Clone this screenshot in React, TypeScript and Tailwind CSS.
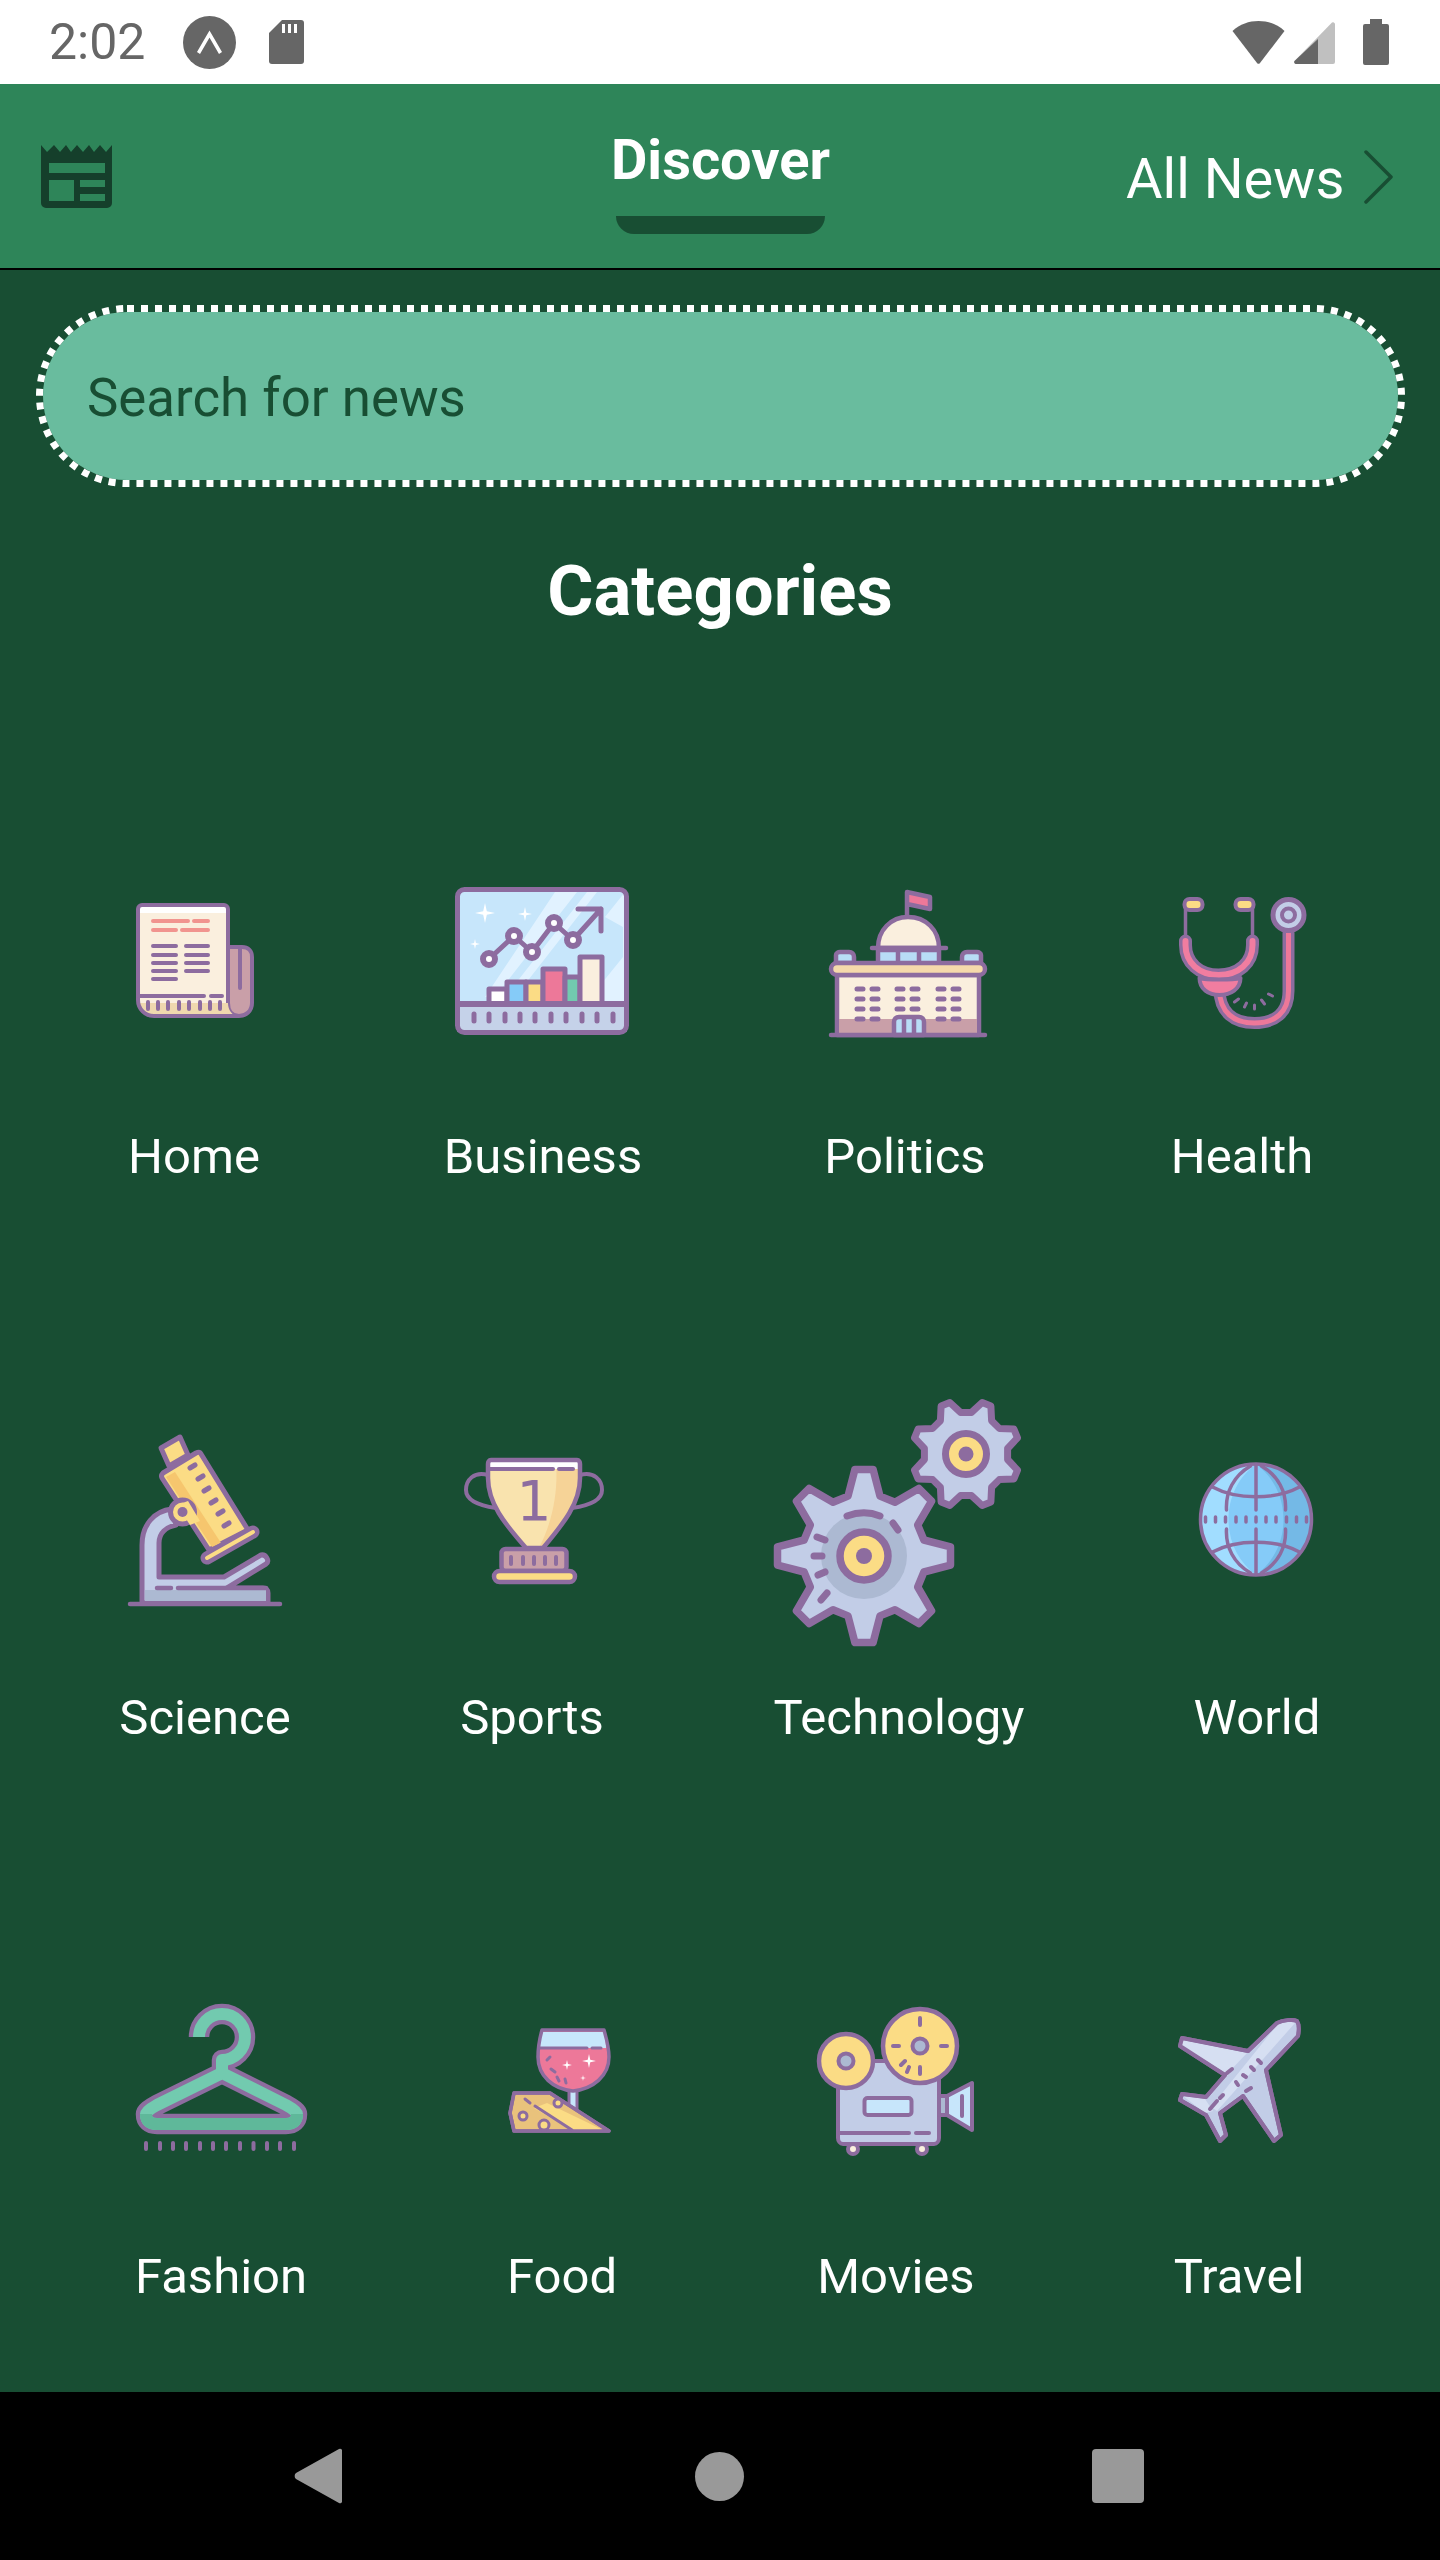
import type { ReactNode } from 'react';

const P = '#8d6c9f';
const CREAM = '#faefde';
const SKY = '#c7e6fb';
const BLUE = '#85cbf8';
const PERI = '#c2cde7';
const SLATE = '#acb9d2';
const YEL = '#fbdc85';
const PINK = '#ed7899';
const ROSE = '#c99fa8';
const GREEN = '#72caaf';

// short vertical purple marks, the icons use them a lot
function Ticks({ xs, y1, y2, w = 4 }: { xs: number[]; y1: number; y2: number; w?: number }) {
  return (
    <g stroke={P} strokeWidth={w} strokeLinecap="round">
      {xs.map((x) => (
        <line key={x} x1={x} x2={x} y1={y1} y2={y2} />
      ))}
    </g>
  );
}

function Marks({ d, w = 4, color = P }: { d: string; w?: number; color?: string }) {
  return <path d={d} fill="none" stroke={color} strokeWidth={w} strokeLinecap="round" strokeLinejoin="round" />;
}

function Star({ x, y, r, fill = '#fff' }: { x: number; y: number; r: number; fill?: string }) {
  const k = r * 0.18;
  return (
    <path
      fill={fill}
      d={`M${x} ${y - r}L${x + k} ${y - k}L${x + r} ${y}L${x + k} ${y + k}L${x} ${y + r}L${x - k} ${y + k}L${x - r} ${y}L${x - k} ${y - k}Z`}
    />
  );
}

function gearPath(cx: number, cy: number, tip: number, root: number, start: number, tipHalf: number, rootHalf: number) {
  let d = '';
  const pt = (r: number, deg: number) => {
    const a = (deg * Math.PI) / 180;
    return `${(cx + r * Math.cos(a)).toFixed(1)} ${(cy + r * Math.sin(a)).toFixed(1)}`;
  };
  for (let i = 0; i < 8; i++) {
    const a = start + i * 45;
    d += `${i === 0 ? 'M' : 'L'}${pt(root, a - rootHalf)}L${pt(tip, a - tipHalf)}L${pt(tip, a + tipHalf)}L${pt(root, a + rootHalf)}`;
  }
  return d + 'Z';
}

function HomeIcon() {
  return (
    <g strokeLinejoin="round">
      <path d="M94 44H106C112 44 116 48 116 54V100C116 108 110 113 103 113C96 113 92 108 92 100V44Z" fill={ROSE} stroke={P} strokeWidth="4" />
      <path d="M2 94H92V100C92 106 95 111 100 113H18C9 113 2 106 2 97Z" fill="#efd8ae" />
      <path d="M2 94V6C2 4 4 2 6 2H90C92 2 92 4 92 6V100H2Z" fill={CREAM} />
      <rect x="4" y="4" width="87" height="6" fill="#fff" />
      <path d="M2 92V97C2 106 9 113 18 113H103M92 100V6C92 4 90 2 88 2H6C4 2 2 4 2 6V92" fill="none" stroke={P} strokeWidth="4" />
      <Marks color="#f1948f" d="M17 18H52M58 18H72M17 27H40M46 27H72" />
      <Marks d="M17 43H40M17 52H40M17 60H40M17 68H40M17 76H40M50 43H72M50 52H72M50 60H72M50 68H72M2 93H68M75 93H86M104 46V85" />
      <Ticks xs={[12, 22, 32, 43, 53, 64, 74, 84]} y1={99} y2={106} />
    </g>
  );
}

function BusinessIcon() {
  return (
    <g strokeLinejoin="round">
      <rect x="2.5" y="2.5" width="169" height="143" rx="7" fill={SKY} />
      <path d="M100 5H122L40 110H30ZM132 5H142L60 110H50ZM150 30L170 5V117H130L168 70V40Z" fill="#e1f2ff" />
      <rect x="2.5" y="117" width="169" height="28" fill="#c5d2e9" />
      <Star x={30} y={26} r={10} />
      <Star x={70} y={27} r={7} />
      <Star x={20} y={57} r={5} />
      <g stroke={P} strokeWidth="5">
        <rect x="34" y="102" width="18" height="15" fill="#fff" />
        <rect x="52" y="95" width="19" height="22" fill={BLUE} />
        <rect x="71" y="95" width="17" height="22" fill={YEL} />
        <rect x="88" y="82" width="22" height="35" fill={PINK} />
        <rect x="110" y="90" width="15" height="27" fill={GREEN} />
        <rect x="125" y="70" width="22" height="47" fill={CREAM} />
      </g>
      <Marks w={5} d="M34 72L59 49L77 65L99 36L118 53L146 22M123 22H146V44" />
      <g fill="#fff" stroke={P} strokeWidth="6">
        <circle cx="34" cy="72" r="6" />
        <circle cx="59" cy="49" r="6" />
        <circle cx="77" cy="65" r="6" />
        <circle cx="99" cy="36" r="6" />
        <circle cx="118" cy="53" r="6" />
      </g>
      <path d="M3 117H171" stroke={P} strokeWidth="6" />
      <rect x="2.5" y="2.5" width="169" height="143" rx="7" fill="none" stroke={P} strokeWidth="5" />
      <Ticks xs={[19, 34, 50, 65, 80, 96, 111, 127, 142, 158]} y1={127} y2={134} w={5} />
    </g>
  );
}

function PoliticsIcon() {
  return (
    <g strokeLinejoin="round" stroke={P} strokeWidth="4.5">
      <path d="M78 27V2L101 7V19L78 14" fill={PINK} />
      <path d="M49 58C49 40 62 27 79 27C97 27 110 40 110 58Z" fill={CREAM} />
      <rect x="49" y="60" width="61" height="14" fill="#b8ddf6" />
      <path d="M69 60V73M90 60V73" />
      <path d="M43 58H117" strokeLinecap="round" />
      <path d="M7 73V65C7 63 9 62 11 62H20C23 62 25 64 25 67V73ZM133 73V67C133 64 135 62 138 62H148C150 62 152 63 152 65V73Z" fill="#b8ddf6" />
      <path d="M8 85H150V145H8Z" fill={CREAM} />
      <path d="M10 129H148V143H10Z" fill={ROSE} stroke="none" />
      <rect x="2" y="73" width="154" height="12" rx="6" fill="#f5d9ab" />
      <path d="M65 145V132C65 129 67 127 70 127H90C93 127 95 129 95 132V145Z" fill="#b8ddf6" />
      <path d="M75 128V144M85 128V144" />
      <path d="M2 145H156" strokeLinecap="round" />
      <g strokeWidth="5" strokeLinecap="round">
        <path d="M28 99H34M43 99H49M68 99H74M83 99H89M109 99H115M124 99H130" />
        <path d="M28 109H34M43 109H49M68 109H74M83 109H89M109 109H115M124 109H130" />
        <path d="M28 119H34M43 119H49M68 119H74M83 119H89M109 119H115M124 119H130" />
        <path d="M28 129H34M43 129H49M109 129H115M124 129H130" />
      </g>
    </g>
  );
}

function HealthIcon() {
  const lower = 'M41 92C41 116 56 126 76 126C96 126 110 116 110 94V36';
  const upper = 'M7 44V48C7 66 21 78 40 78C60 78 74 66 74 48V44';
  return (
    <g strokeLinejoin="round">
      <path d={lower} fill="none" stroke={P} strokeWidth="12" strokeLinecap="round" />
      <path d={lower} fill="none" stroke={PINK} strokeWidth="5" />
      <Marks d="M7 12V40M74 12V40" w={3.5} />
      <path d={upper} fill="none" stroke={P} strokeWidth="13" strokeLinecap="round" />
      <path d={upper} fill="none" stroke="#f17da0" strokeWidth="6" strokeLinecap="round" />
      <path d="M21 81C21 92 30 98 41 98C52 98 62 92 62 81C54 83 28 83 21 81Z" fill="#f17da0" stroke={P} strokeWidth="4" />
      <rect x="6" y="2" width="18" height="11" rx="5" fill={YEL} stroke={P} strokeWidth="4" />
      <rect x="57" y="2" width="18" height="11" rx="5" fill={YEL} stroke={P} strokeWidth="4" />
      <circle cx="110" cy="18" r="15.5" fill={PERI} stroke={P} strokeWidth="5" />
      <circle cx="110" cy="18" r="6.5" fill={PERI} stroke={P} strokeWidth="4" />
      <Marks w={3} d="M56 105L60 102M66 110L68 106M76 112V108M86 107L83 103M94 99L90 97" />
    </g>
  );
}

function ScienceIcon() {
  return (
    <g strokeLinejoin="round">
      <path d="M42 74C24 76 12 90 12 110V168H138V158C138 155 136 153 133 153H97L136 129C140 126 136 119 131 120L94 142H29V108C29 98 36 92 46 90Z" fill={PERI} stroke={P} strokeWidth="5" />
      <path d="M15 155H136V166H15Z" fill={SLATE} />
      <Marks d="M27 153H41M48 153H136M0 169H150" w={4.5} />
      <path d="M31 13L50 2L58 20L39 31Z" fill={YEL} stroke={P} strokeWidth="5" />
      <path d="M33 38L66 18C68 17 70 17 71 19L118 95L79 115L32 43C31 41 32 39 33 38Z" fill={YEL} stroke={P} strokeWidth="5" />
      <path d="M36 42L45 37L91 108L82 112Z" fill="#f6c66e" />
      <path d="M77 123L123 97" stroke={P} strokeWidth="13" strokeLinecap="round" />
      <path d="M77 123L123 97" stroke={YEL} strokeWidth="4" strokeLinecap="round" />
      <circle cx="52.5" cy="77" r="12" fill={YEL} stroke={P} strokeWidth="5" />
      <path d="M58 66L70 86L60 90L47 70Z" fill={YEL} />
      <circle cx="52.5" cy="77" r="5" fill={P} />
      <Marks w={5} d="M60 33L65 30M68 44L73 41M74 56L79 53M81 68L86 65M88 79L93 76M94 91L99 88" />
    </g>
  );
}

function SportsIcon() {
  return (
    <g strokeLinejoin="round">
      <Marks w={4} d="M24 17C10 13 2 22 2 32C2 44 18 48 32 50M116 17C130 13 138 22 138 32C138 44 122 48 108 50" />
      <path d="M24 2H116V20C116 45 100 65 79 90H62C40 65 24 45 24 20Z" fill="#f9e3ae" />
      <path d="M92 4H114V20C114 45 99 64 78 88H76C90 60 94 30 92 4Z" fill="#f6d397" />
      <rect x="26" y="4" width="88" height="7" fill="#fff" />
      <path d="M24 6C24 4 25 2 27 2H113C115 2 116 4 116 6V20C116 45 100 65 79 90H62C40 65 24 45 24 20Z" fill="none" stroke={P} strokeWidth="4.5" />
      <Marks w={4} d="M25 11H89M95 11H109" />
      <text x="70" y="62" textAnchor="middle" fontFamily="DejaVu Sans, sans-serif" fontSize="55" fill={P}>
        1
      </text>
      <rect x="37.5" y="91" width="65" height="22" rx="4" fill={ROSE} stroke={P} strokeWidth="4.5" />
      <Ticks xs={[47, 59, 70, 81, 92]} y1={99} y2={106} />
      <rect x="30" y="113" width="81" height="11" rx="5.5" fill={YEL} stroke={P} strokeWidth="4.5" />
    </g>
  );
}

function TechnologyIcon() {
  return (
    <g strokeLinejoin="round">
      <path d={gearPath(193, 56, 54, 42, 22.5, 5, 15)} fill={PERI} stroke={P} strokeWidth="7" />
      <circle cx="193" cy="56" r="20.5" fill={YEL} stroke={P} strokeWidth="7" />
      <circle cx="193" cy="56" r="7.5" fill={P} />
      <path d={gearPath(91, 158, 87, 62, 0, 6, 15)} fill={PERI} stroke={P} strokeWidth="7.5" />
      <circle cx="91" cy="158" r="43" fill={SLATE} />
      <circle cx="91" cy="158" r="24" fill={YEL} stroke={P} strokeWidth="7.5" />
      <circle cx="91" cy="158" r="8" fill={P} />
      <Marks w={7} d="M74 118C85 114 97 114 107 118M120 125L125 132M52 142L44 139M41 158H49M52 174L45 177M54 195L48 202" />
    </g>
  );
}

function WorldIcon() {
  return (
    <g strokeLinejoin="round">
      <circle cx="57.5" cy="57.5" r="55.5" fill={BLUE} />
      <path d="M57.5 2C27 2 2 27 2 57.5C2 88 27 113 57.5 113C40 100 30 80 30 57.5C30 35 40 15 57.5 2Z" fill="#a1ddff" />
      <path d="M57.5 2C88 2 113 27 113 57.5C113 88 88 113 57.5 113C75 100 85 80 85 57.5C85 35 75 15 57.5 2Z" fill="#74b9e6" />
      <circle cx="57.5" cy="57.5" r="55.5" fill="none" stroke={P} strokeWidth="3.5" />
      <g fill="none" stroke={P} strokeWidth="3.5" strokeLinecap="round">
        <path d="M57.5 3V48M57.5 67V112" />
        <path d="M28 48C27 30 35 14 52 4M87 48C88 30 80 14 63 4M28 67C27 85 35 101 52 111M87 67C88 85 80 101 63 111" />
        <path d="M14 25C38 38 77 38 101 25M14 90C38 77 77 77 101 90" />
      </g>
      <Ticks xs={[7, 17, 27, 37.5, 47.5, 57.5, 67.5, 77.5, 88, 98, 108]} y1={55} y2={60} w={3.5} />
    </g>
  );
}

function FashionIcon() {
  const hanger = 'M63 32A23 23 0 1 1 86 55V68M86 68L21 100Q10 106 10 109Q10 119 21 119H150Q161 119 161 109Q161 106 150 100Z';
  return (
    <g strokeLinejoin="round">
      <path d={hanger} fill="none" stroke={P} strokeWidth="20.5" />
      <path d={hanger} fill="none" stroke={GREEN} strokeWidth="12" />
      <path d="M10 109Q10 119 21 119H150Q161 119 161 109" fill="none" stroke="#5fb89a" strokeWidth="12" />
      <Ticks xs={[10, 24, 37, 50, 64, 77, 90, 104, 117.5, 131, 144, 158]} y1={138} y2={144} />
    </g>
  );
}

function FoodIcon() {
  return (
    <g strokeLinejoin="round">
      <rect x="60" y="60" width="8" height="24" fill={SKY} stroke={P} strokeWidth="3" />
      <path d="M33 1H95C97 8 100 18 100 28C100 47 84 60 64 62C44 60 29 47 29 28C29 18 31 8 33 1Z" fill={PINK} />
      <path d="M33 3H95C96 8 97 14 97 19H31C31 14 32 8 33 3Z" fill={SKY} />
      <path d="M33 1H95C97 8 100 18 100 28C100 47 84 60 64 62C44 60 29 47 29 28C29 18 31 8 33 1Z" fill="none" stroke={P} strokeWidth="3.5" />
      <Marks w={3} d="M31 19H78M83 19H92M38 31L41 28M42 40L46 43M48 48L50 52M56 50L57 54" />
      <Star x={58} y={36} r={5} />
      <Star x={80} y={32} r={7} />
      <Star x={74} y={49} r={3} />
      <path d="M5 64H41L100 102H5L1 84Z" fill="#e9c27c" stroke={P} strokeWidth="3.5" />
      <path d="M25 79L38 74L94 101H62Z" fill={YEL} />
      <path d="M5 64H41L100 102H5L1 84Z" fill="none" stroke={P} strokeWidth="3.5" />
      <Marks w={3} d="M16 70L21 74M26 77L63 101" />
      <g fill={YEL} stroke={P} strokeWidth="3">
        <circle cx="49" cy="74" r="4" />
        <circle cx="14" cy="87" r="4" />
        <circle cx="35" cy="96" r="5" />
      </g>
    </g>
  );
}

function MoviesIcon() {
  return (
    <g strokeLinejoin="round">
      <circle cx="36" cy="142" r="5" fill={CREAM} stroke={P} strokeWidth="4" />
      <circle cx="105" cy="142" r="5" fill={CREAM} stroke={P} strokeWidth="4" />
      <path d="M21 54H122V131C122 134 120 137 117 137H26C23 137 21 134 21 131Z" fill={PERI} stroke={P} strokeWidth="4" />
      <rect x="47.5" y="91" width="47" height="17" rx="3" fill={SKY} stroke={P} strokeWidth="4" />
      <path d="M122 89H130V108H122Z" fill={SLATE} stroke={P} strokeWidth="4" />
      <path d="M130 89L155 76V123L130 108Z" fill={SKY} stroke={P} strokeWidth="4" />
      <Marks d="M145 89V109M23 126H92M99 126H112" />
      <circle cx="29" cy="54" r="27" fill={YEL} stroke={P} strokeWidth="4.5" />
      <circle cx="29" cy="54" r="7.5" fill={SLATE} stroke={P} strokeWidth="4" />
      <circle cx="103" cy="39" r="37" fill={YEL} stroke={P} strokeWidth="4.5" />
      <circle cx="103" cy="39" r="7.5" fill={SLATE} stroke={P} strokeWidth="4" />
      <Marks d="M103 11V18M103 60V67M76 39H82M124 39H130M88 54L84 58M92 60L90 65" />
    </g>
  );
}

function TravelIcon() {
  return (
    <g strokeLinejoin="round">
      <path
        d="M100 4C106 1 116 0 120 2C122 5 122 12 121 17L89 51L104 116L97 122L66 77L43 94L49 116L43 122L29 96L3 81L5 75L29 78L48 56L3 27L5 19L71 32Z"
        fill={PERI}
        stroke={P}
        strokeWidth="4"
      />
      <path d="M5 21L70 34L50 55L5 27ZM6 77L28 80L36 92L28 94ZM100 6C106 3 114 2 118 4L40 92L34 88Z" fill="#d6dff2" />
      <path d="M100 4C106 1 116 0 120 2C122 5 122 12 121 17L89 51L104 116L97 122L66 77L43 94L49 116L43 122L29 96L3 81L5 75L29 78L48 56L3 27L5 19L71 32Z" fill="none" stroke={P} strokeWidth="4" />
      <Marks d="M81 41L84 44M74 48L77 51M66 56L69 58M59 63L61 66M50 54L55 50M69 72L74 69M43 79L46 76M33 90L40 82" />
    </g>
  );
}

type Cell = { label: string; className: string; tx: number; ty: number; icon: ReactNode };

const rows: { className: string; cells: Cell[] }[] = [
  {
    className: 'mt-[205px]',
    cells: [
      { label: 'Home', className: 'ml-[69px]', tx: 67, ty: 67, icon: <HomeIcon /> },
      { label: 'Business', className: 'ml-[99px]', tx: 37, ty: 51, icon: <BusinessIcon /> },
      { label: 'Politics', className: 'ml-[112px]', tx: 49, ty: 54, icon: <PoliticsIcon /> },
      { label: 'Health', className: 'ml-[87px]', tx: 61.5, ty: 61, icon: <HealthIcon /> },
    ],
  },
  {
    className: 'mt-[212px]',
    cells: [
      { label: 'Science', className: 'ml-[80px]', tx: 50, ty: 38, icon: <ScienceIcon /> },
      { label: 'Sports', className: 'ml-[77px]', tx: 57, ty: 61, icon: <SportsIcon /> },
      { label: 'Technology', className: 'ml-[117px]', tx: -1, ty: 1, icon: <TechnologyIcon /> },
      { label: 'World', className: 'ml-[108px]', tx: 66.5, ty: 65, icon: <WorldIcon /> },
    ],
  },
  {
    className: 'mt-[210px]',
    cells: [
      { label: 'Fashion', className: 'ml-[96px]', tx: 40, ty: 49, icon: <FashionIcon /> },
      { label: 'Food', className: 'ml-[91px]', tx: 72, ty: 73, icon: <FoodIcon /> },
      { label: 'Movies', className: 'ml-[84px]', tx: 46, ty: 51, icon: <MoviesIcon /> },
      { label: 'Travel', className: 'ml-[93px]', tx: 63, ty: 63, icon: <TravelIcon /> },
    ],
  },
];

function StatusBar() {
  return (
    <div className="flex h-[84px] shrink-0 items-center bg-white text-[#666]">
      <span className="ml-[49px] text-[50px] leading-none">2:02</span>
      <svg className="ml-[38px]" width="53" height="53" viewBox="0 0 53 53">
        <circle cx="26.5" cy="26.5" r="26.5" fill="#666" />
        <path d="M15.5 37L26.5 18L37.5 37" fill="none" stroke="#fff" strokeWidth="3.5" />
      </svg>
      <svg className="ml-[33px]" width="35" height="44" viewBox="0 0 35 44">
        <path d="M13 0H32A3 3 0 0 1 35 3V41A3 3 0 0 1 32 44H3A3 3 0 0 1 0 41V13Z" fill="#666" />
        <path d="M13 4H16V13H13ZM19 4H22V13H19ZM25 4H28V13H25Z" fill="#fff" />
      </svg>
      <svg className="ml-[928px]" width="53" height="43" viewBox="0 0 53 43">
        <path d="M0.5 10C8 3 17 0 26.5 0C36 0 45 3 52.5 10L28 42A2 2 0 0 1 25 42Z" fill="#666" />
      </svg>
      <svg className="ml-[9px] mt-[2px]" width="41" height="42" viewBox="0 0 41 42">
        <path d="M38 0.5A2 2 0 0 1 41 2V40A2 2 0 0 1 39 42H2A2 2 0 0 1 0.5 39Z" fill="#c0c0c0" />
        <path d="M24 17V42H2A2 2 0 0 1 0.5 39Z" fill="#666" />
      </svg>
      <svg className="ml-[28px]" width="26" height="46" viewBox="0 0 26 46">
        <path d="M7 0H19V5H24A2 2 0 0 1 26 7V44A2 2 0 0 1 24 46H2A2 2 0 0 1 0 44V7A2 2 0 0 1 2 5H7Z" fill="#666" />
      </svg>
    </div>
  );
}

function AppBar() {
  return (
    <div className="relative flex h-[186px] shrink-0 items-start border-b-2 border-black bg-[#2e8559]">
      <svg className="ml-[41px] mt-[61px]" width="71" height="63" viewBox="0 0 71 63">
        <path
          d="M0 0L6 7L13 0L19 7L25 0L30 7L36 0L42 7L48 0L53 7L59 0L65 7L71 0V58A5 5 0 0 1 66 63H5A5 5 0 0 1 0 58Z"
          fill="#153f2b"
        />
        <path d="M8 18H64V28H8ZM8 35H33V56H8ZM39 35H64V42H39ZM39 49H64V56H39Z" fill="#2e8559" />
      </svg>
      <div className="ml-[504px] flex w-[209px] flex-col items-center pt-[43px]">
        <span className="whitespace-nowrap text-[56px] font-bold leading-[66px] text-white">Discover</span>
        <div className="mt-[23px] h-[18px] w-[209px] rounded-b-[18px] bg-[#184e33]" />
      </div>
      <span className="ml-[301px] mt-[62px] whitespace-nowrap text-[56px] leading-[66px] text-white">All News</span>
      <svg className="ml-[20px] mt-[66px]" width="30" height="54" viewBox="0 0 30 54">
        <path d="M2 2L27 27L2 52" fill="none" stroke="#184e33" strokeWidth="3.5" strokeLinecap="round" strokeLinejoin="round" />
      </svg>
    </div>
  );
}

function SearchBox() {
  return (
    <div className="relative ml-[36px] mt-[35px] h-[182px] w-[1369px] p-[7px]">
      <div className="flex h-[168px] items-center rounded-full bg-[#69bc9e] pl-[44px] pt-[5px]">
        <span className="text-[52.8px] text-[#184e33]">Search for news</span>
      </div>
      <svg className="absolute inset-0" width="1369" height="182" viewBox="0 0 1369 182">
        <rect x="3.5" y="3.5" width="1362" height="175" rx="87.5" fill="none" stroke="#fff" strokeWidth="7" strokeDasharray="7 7" />
      </svg>
    </div>
  );
}

function NavBar() {
  return (
    <div className="flex h-[168px] shrink-0 items-center bg-black">
      <svg className="ml-[294px]" width="48" height="56" viewBox="0 0 48 56">
        <path d="M45 1A2 2 0 0 1 48 3V53A2 2 0 0 1 45 55L2 31A4 4 0 0 1 2 25Z" fill="#999" />
      </svg>
      <div className="ml-[353px] h-[49px] w-[49px] rounded-full bg-[#999]" />
      <div className="ml-[348px] h-[54px] w-[52px] rounded-[4px] bg-[#999]" />
    </div>
  );
}

export default function App() {
  return (
    <div className="flex h-[2560px] w-[1440px] flex-col overflow-hidden font-[family-name:Roboto,sans-serif]">
      <StatusBar />
      <AppBar />
      <div className="flex-1 bg-[#184e33]">
        <SearchBox />
        <h1 className="mt-[64px] text-center text-[70.7px] font-bold leading-[80px] text-white">Categories</h1>
        {rows.map((row) => (
          <div key={row.cells[0].label} className={`flex ${row.className}`}>
            {row.cells.map((cell) => (
              <div key={cell.label} className={`flex w-[250px] shrink-0 flex-col items-center ${cell.className}`}>
                <svg width="250" height="250" viewBox="0 0 250 250" className="overflow-visible">
                  <g transform={`translate(${cell.tx} ${cell.ty})`}>{cell.icon}</g>
                </svg>
                <span className="mt-[42px] whitespace-nowrap text-[49px] leading-[57px] text-white">{cell.label}</span>
              </div>
            ))}
          </div>
        ))}
      </div>
      <NavBar />
    </div>
  );
}
